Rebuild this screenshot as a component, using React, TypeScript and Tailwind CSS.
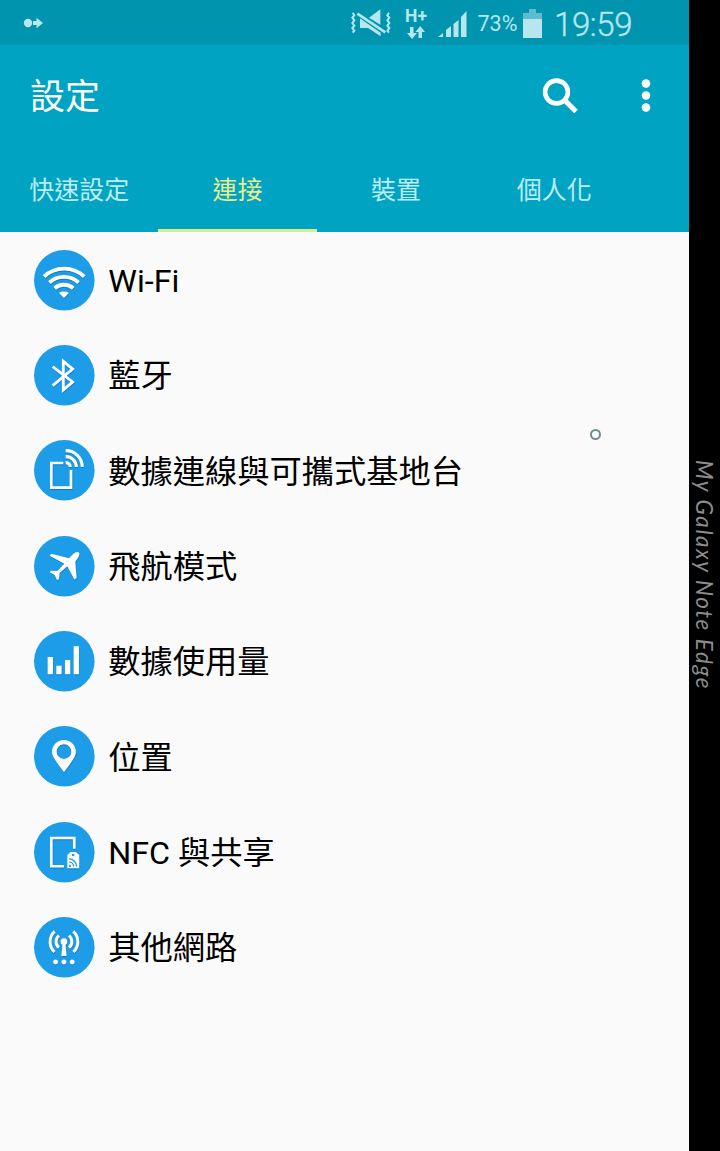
import type { ReactNode } from "react";

const BLUE = "#1d9de8";

function Badge({ children }: { children: ReactNode }) {
  return (
    <svg viewBox="0 0 182 182" className="size-[60.6px] shrink-0 overflow-visible" fill="none" stroke="none">
      <circle cx="91" cy="91" r="91" fill={BLUE} />
      <g className="[filter:drop-shadow(1px_3px_1px_rgba(0,60,110,0.35))]">{children}</g>
    </svg>
  );
}

const wifi = (
  <g stroke="#fff" strokeWidth="11.5">
    <path d="M30 80A88 88 0 0 1 151 80" />
    <path d="M46 98A65 65 0 0 1 134 98" />
    <path d="M62 115A42 42 0 0 1 118 115" />
    <path d="M75 129Q90 120 105 129L90 144Z" fill="#fff" stroke="none" />
  </g>
);

const bluetooth = (
  <path d="M56 65L116 111L88 135V49L116 72L56 122" stroke="#fff" strokeWidth="8.5" />
);

const tethering = (
  <g stroke="#fff" strokeWidth="8">
    <path d="M88 69H52V143H111V90" />
    <g strokeWidth="9.5">
      <path d="M95 32A49 49 0 0 1 145 81" />
      <path d="M95 50A31 31 0 0 1 127 81" />
      <path d="M95 68A13 13 0 0 1 109 81" />
    </g>
  </g>
);

const airplane = (
  <path
    fill="#fff"
    d="M133 48Q124 47 118 54L105 67L52 53L47 59L91 83L70 105L51 104L47 109L62 117L69 132L75 130L77 111L100 91L121 131L128 126L124 77L134 62Q139 52 133 48Z"
  />
);

const bars = (
  <path fill="#fff" d="M41 78h16v52h-16zM67 104h16v26h-16zM93 87h16v43h-16zM119 46h16v84h-16z" />
);

const pin = (
  <path
    fill="#fff"
    fillRule="evenodd"
    d="M90 42C70 42 54 58 54 78C54 94 76 119 90 139C104 119 126 94 126 78C126 58 110 42 90 42ZM90 55A22 22 0 1 1 90 99A22 22 0 1 1 90 55Z"
  />
);

const nfc = (
  <g>
    <path d="M90 133H52V48H121V80" stroke="#fff" strokeWidth="8" />
    <path d="M100 99L110 90H125L136 99V139H100Z" fill="#fff" />
    <circle cx="117.500" cy="99" r="4" fill={BLUE} />
    <g stroke={BLUE} strokeWidth="4">
      <path d="M105 111A23 23 0 0 1 128 134" />
      <path d="M105 120A14 14 0 0 1 119 134" />
      <path d="M105 128A6 6 0 0 1 111 134V135H105Z" fill={BLUE} stroke="none" />
    </g>
  </g>
);

const antenna = (
  <g>
    <circle cx="90" cy="74" r="10" fill="#fff" />
    <path d="M86 78H94L98 117H82Z" fill="#fff" />
    <g stroke="#fff" strokeWidth="9">
      <path d="M75 56A23 23 0 0 0 75 92M105 56A23 23 0 0 1 105 92" />
      <path d="M62 43A42 42 0 0 0 62 105M118 43A42 42 0 0 1 118 105" />
    </g>
    <g fill="#fff">
      <circle cx="65" cy="135" r="7.500" />
      <circle cx="90" cy="135" r="7.500" />
      <circle cx="115" cy="135" r="7.500" />
    </g>
  </g>
);

const items: { label: string; icon: ReactNode }[] = [
  { label: "Wi-Fi", icon: wifi },
  { label: "藍牙", icon: bluetooth },
  { label: "數據連線與可攜式基地台", icon: tethering },
  { label: "飛航模式", icon: airplane },
  { label: "數據使用量", icon: bars },
  { label: "位置", icon: pin },
  { label: "NFC 與共享", icon: nfc },
  { label: "其他網路", icon: antenna },
];

const tabs = ["快速設定", "連接", "裝置", "個人化"];

function StatusBar() {
  return (
    <div className="flex h-[45px] items-center bg-[#0094ae] pt-px pl-[23px] text-[#b6e6ee]">
      <svg viewBox="0 0 20 12" className="h-3 w-5" fill="currentColor">
        <circle cx="5" cy="6" r="4.200" />
        <path d="M10 4H13.500V.8L20 6L13.500 11.200V8H10Z" />
      </svg>
      <svg viewBox="0 0 126 78" className="ml-[307px] h-[26px] w-[42px] overflow-visible" fill="none" stroke="currentColor">
        <path strokeWidth="6" d="M8 8L13 16L7 23L13 31L7 39L13 47L7 54L13 62L8 68M117 8L112 16L118 23L112 31L118 39L112 47L118 54L112 62L117 68" />
        <path fill="currentColor" stroke="none" d="M30 25L92 68V79L54 54H30ZM57 23L91 -2V44Z" />
        <path stroke="#0094ae" strokeWidth="13" d="M22 11L106 67" />
        <path strokeWidth="8" d="M22 11L106 67" />
      </svg>
      <div className="ml-[12px] flex w-[24px] flex-col items-center pt-[2px]">
        <span className="h-[15px] text-[17.500px] leading-[15px] font-bold">H+</span>
        <svg viewBox="0 0 18 14" className="mt-[2px] h-[14px] w-[18px]" fill="currentColor">
          <path d="M3 1H6.500V7H10L5 13L0 7H3ZM11.500 12H15V6H18L13.200 0L8.500 6H11.500Z" />
        </svg>
      </div>
      <svg viewBox="0 0 29 29" className="ml-[10px] h-[29px] w-[29px]" fill="currentColor">
        <path d="M0 28L5 24V28ZM8 21L13 17V28H8ZM15.500 15L20.500 11V28H15.500ZM23 8L28.500 2V28H23Z" />
      </svg>
      <span className="ml-[10.500px] w-[40px] pt-px text-[21.500px] leading-none">73%</span>
      <svg viewBox="0 0 19 29" className="ml-[5px] h-[29px] w-[19px]" fill="currentColor">
        <path fill="#5dbccd" d="M6 0H13V4H19V11H0V4H6Z" />
        <path d="M0 10H19V29H0Z" />
      </svg>
      <span className="ml-[12.500px] pt-[2px] text-[33px] leading-none font-light tracking-[-0.400px] [-webkit-text-stroke:0.4px_#b6e6ee]">
        19:59
      </span>
    </div>
  );
}

export default function App() {
  return (
    <div className="relative flex h-[1151px] w-[720px] overflow-hidden bg-black font-['Roboto','Noto_Sans_CJK_TC',sans-serif]">
      <main className="flex w-[689px] shrink-0 flex-col bg-[#fafafa]">
        <StatusBar />
        <header className="flex h-[187px] flex-col bg-[#00a4c2]">
          <div className="flex h-[102px] items-center pl-[30px] text-white">
            <h1 className="flex-1 pt-[2px] text-[35px] leading-none font-normal">設定</h1>
            <svg viewBox="0 0 36 36" className="size-9 -translate-x-px -translate-y-[0.5px]" fill="none" stroke="currentColor">
              <circle cx="14.500" cy="14.500" r="11.400" strokeWidth="4.600" />
              <path d="M22.500 22.500L34 34" strokeWidth="5.200" />
            </svg>
            <svg viewBox="0 0 10 34" className="mr-[38px] ml-[62px] h-[34px] w-[10px] -translate-y-[0.5px]" fill="currentColor">
              <circle cx="5" cy="5" r="4.300" />
              <circle cx="5" cy="17" r="4.300" />
              <circle cx="5" cy="29" r="4.300" />
            </svg>
          </div>
          <nav className="flex h-[85px]">
            {tabs.map((t) => (
              <button
                key={t}
                className={
                  t === "連接"
                    ? "flex w-[158.400px] items-center justify-center border-b-[3px] border-[#d8ec91] pt-[4px] text-[25px] leading-none text-[#e9ec8b]"
                    : "flex w-[158.400px] items-center justify-center border-b-[3px] border-transparent pt-[4px] text-[25px] leading-none text-[#bcecf4]"
                }
              >
                {t}
              </button>
            ))}
          </nav>
        </header>
        <ul className="flex flex-col pt-[0.500px]">
          {items.map((it) => (
            <li key={it.label} className="flex h-[95.300px] items-center gap-[14px] pl-[33.700px]">
              <Badge>{it.icon}</Badge>
              <span className="pt-[2px] text-[32.250px] leading-none whitespace-nowrap text-black">{it.label}</span>
            </li>
          ))}
        </ul>
      </main>
      <aside className="flex flex-1 items-start justify-center pt-[460px] pr-px">
        <span className="font-['Lato',sans-serif] text-[22.500px] leading-[30px] font-normal tracking-[1.600px] whitespace-nowrap text-[#8c8c8c] italic [writing-mode:vertical-rl]">
          My Galaxy Note Edge
        </span>
      </aside>
      <div className="absolute top-[429px] left-[589.500px] size-[11px] rounded-full border-2 border-[#78898c] bg-[#f4ffff]" />
    </div>
  );
}
